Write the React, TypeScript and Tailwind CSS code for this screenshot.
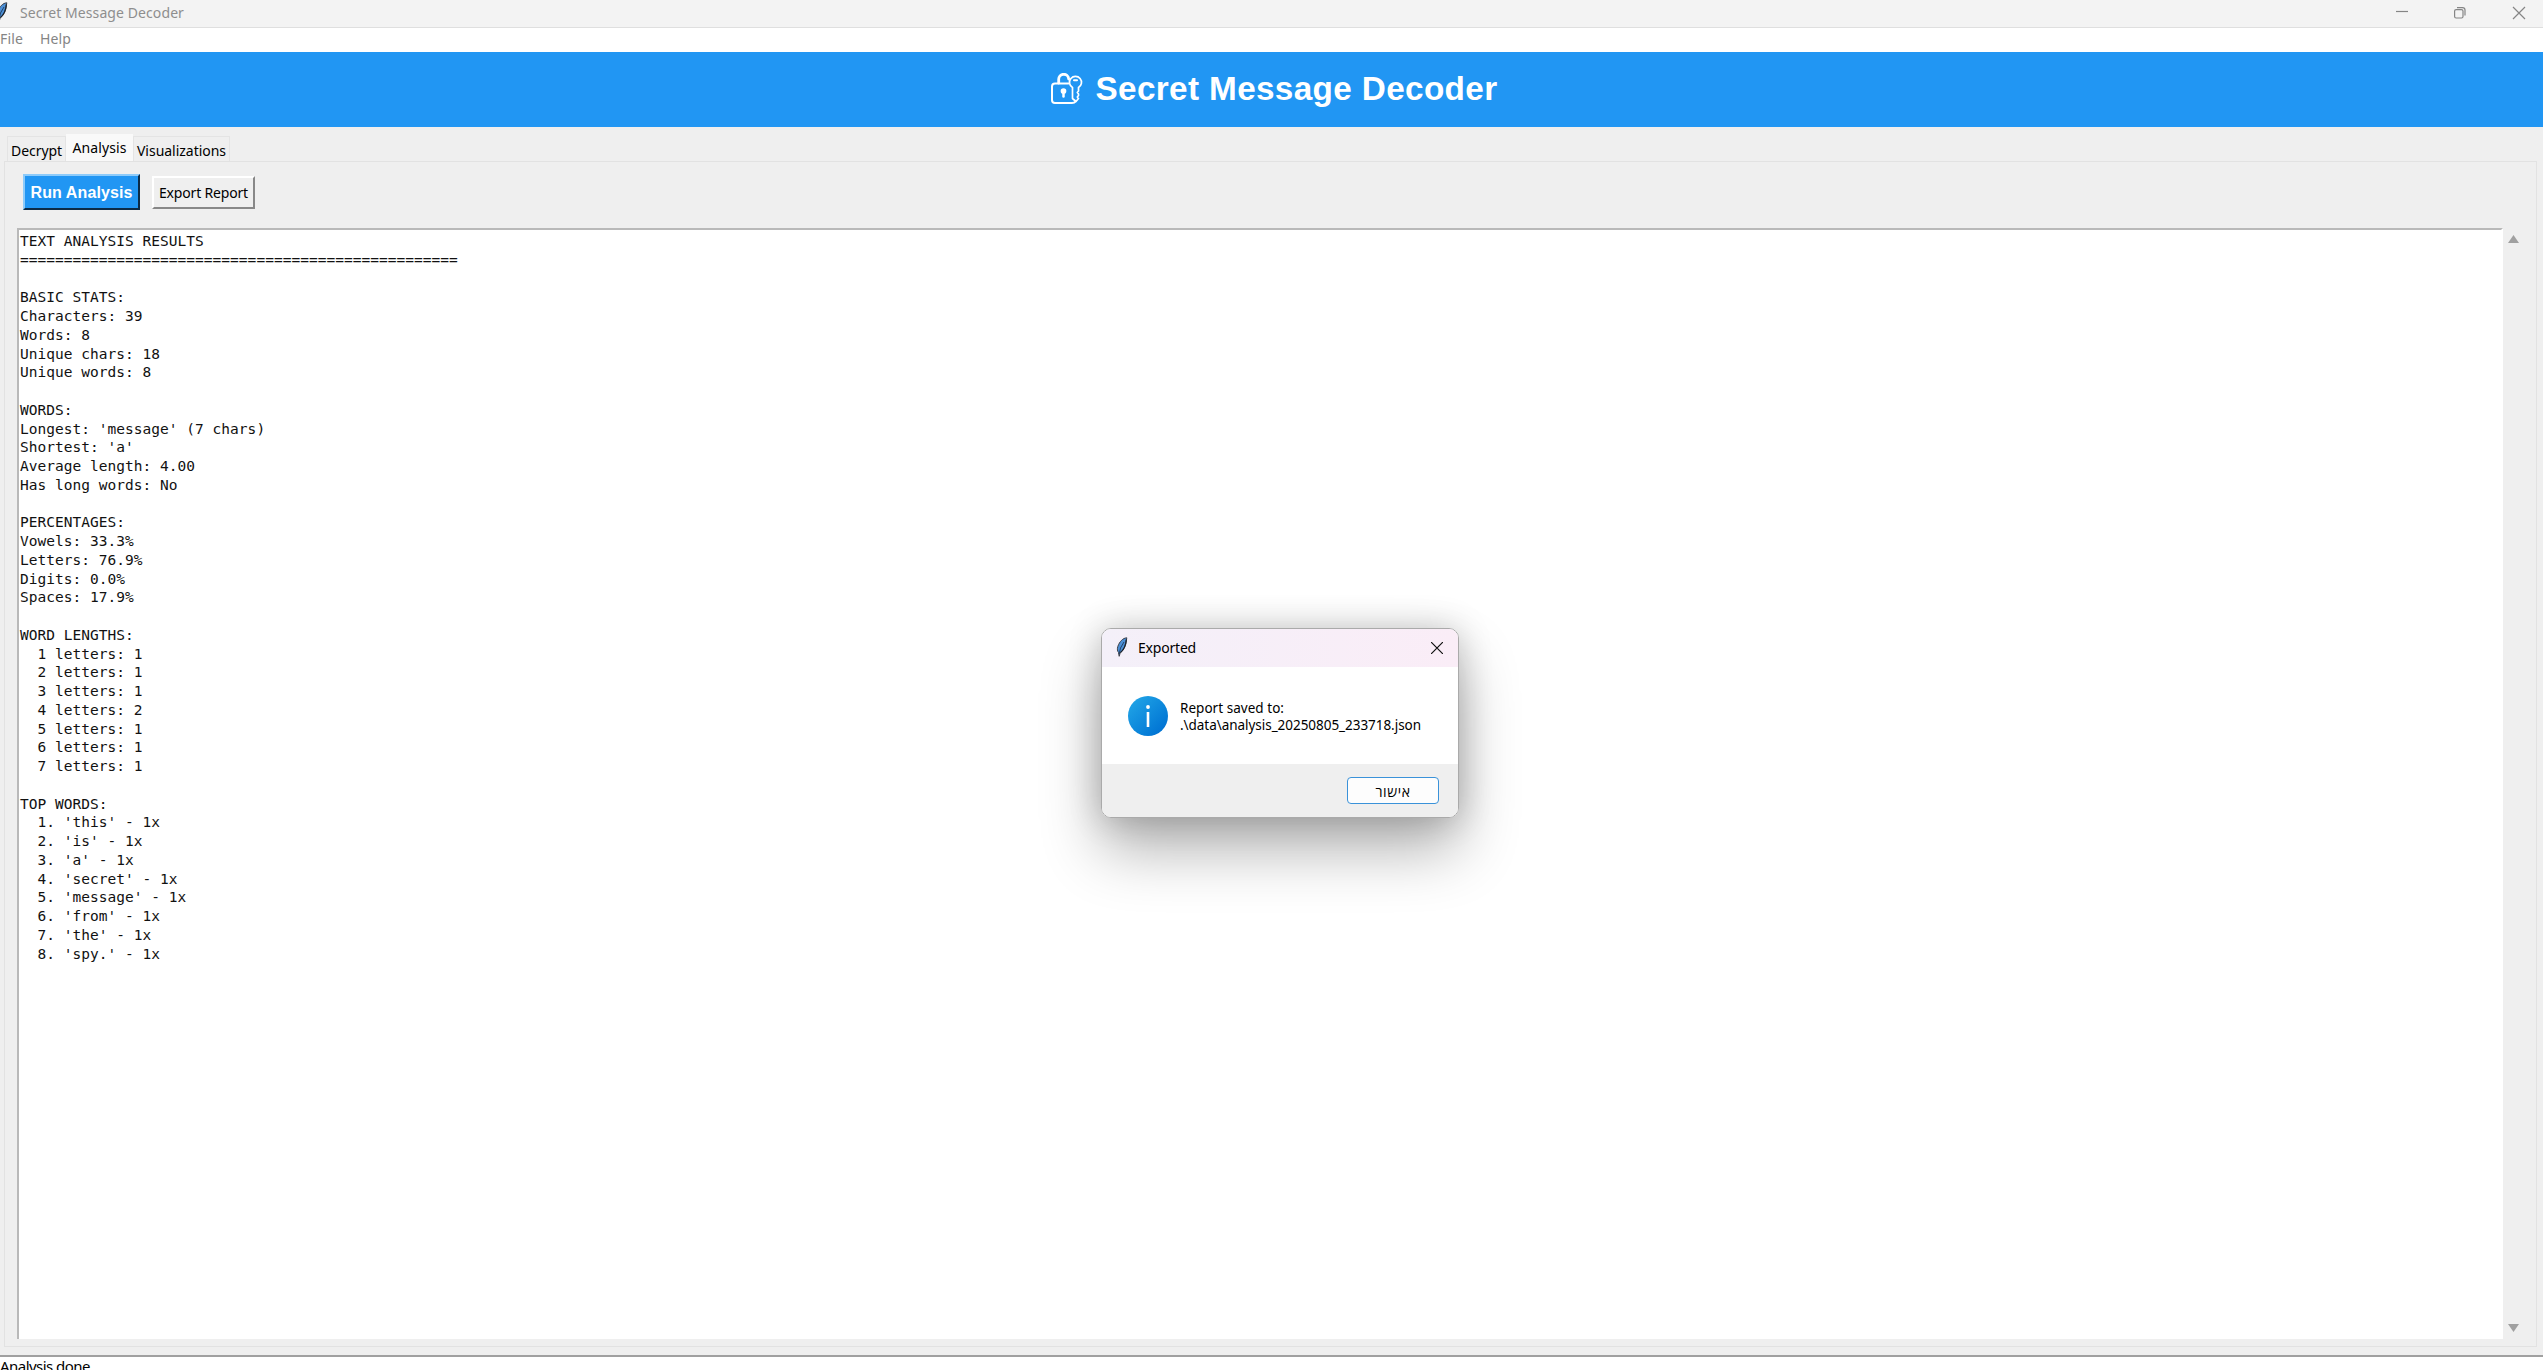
import React from "react";

const REPORT = `TEXT ANALYSIS RESULTS
==================================================

BASIC STATS:
Characters: 39
Words: 8
Unique chars: 18
Unique words: 8

WORDS:
Longest: 'message' (7 chars)
Shortest: 'a'
Average length: 4.00
Has long words: No

PERCENTAGES:
Vowels: 33.3%
Letters: 76.9%
Digits: 0.0%
Spaces: 17.9%

WORD LENGTHS:
  1 letters: 1
  2 letters: 1
  3 letters: 1
  4 letters: 2
  5 letters: 1
  6 letters: 1
  7 letters: 1

TOP WORDS:
  1. 'this' - 1x
  2. 'is' - 1x
  3. 'a' - 1x
  4. 'secret' - 1x
  5. 'message' - 1x
  6. 'from' - 1x
  7. 'the' - 1x
  8. 'spy.' - 1x`;

/* Spreads letter spacing so a caption fills the given width */
function Label({ text, width, className = "", rtl = false }: { text: string; width: number; className?: string; rtl?: boolean }) {
  const ref = React.useRef<HTMLSpanElement>(null);
  const [spacing, setSpacing] = React.useState(0);
  React.useLayoutEffect(() => {
    if (ref.current) {
      const natural = ref.current.getBoundingClientRect().width;
      setSpacing((width - natural) / text.length);
    }
  }, []);
  return (
    <span ref={ref} dir={rtl ? "rtl" : "ltr"} className={"inline-block whitespace-pre " + className} style={{ letterSpacing: spacing }}>
      {text}
    </span>
  );
}

function Feather({ className }: { className: string }) {
  return (
    <svg className={className} viewBox="0 0 12 20">
      <path d="M10.800.800C7 1 3.500 4.500 1.800 9.500c-.7 2.500-.5 4.500.7 6L3.200 19.300l1-3.500C7.500 13.500 9.800 9 10.800.800z" fill="#4b8fd6" stroke="#3c3f46" strokeWidth="1" />
      <path d="M10.300 2.500C10 8 8 12.500 4.500 15.500" fill="none" stroke="#1c222b" strokeWidth="1.300" />
      <path d="M8 5 4.500 11 3.200 17" fill="none" stroke="#1d3a5c" strokeWidth=".9" />
    </svg>
  );
}

function LockKey() {
  return (
    <svg className="h-8 w-[33px]" viewBox="0 0 33 32" fill="none" stroke="white" strokeWidth="1.700" strokeLinejoin="round" strokeLinecap="round">
      <path d="M18.500 10.500H5q-3 0-3 3V27q0 3 3 3H22q2.500 0 3.500-1.500" strokeWidth="2" />
      <path d="M8.700 10V6.500a5 5 0 0 1 10-.5" strokeWidth="2.800" />
      <path d="M22.500 14.500a6 6 0 1 1 6 0V18l-1.200 1.500 1.200 1.500v1.500L27.300 24l1.200 1.500-2.500 3-3.500-3z" />
      <path d="M24 7.200h3" strokeWidth="2" />
      <circle cx="13.500" cy="18" r="2" fill="white" />
      <path d="M13.500 19v4.500" strokeWidth="2.500" />
    </svg>
  );
}

export default function App() {
  return (
    <div className="relative flex h-[1370px] w-full flex-col overflow-hidden bg-[#efefef] font-['Open_Sans',sans-serif] text-black">
      <header className="flex h-7 shrink-0 items-center border-b border-[#dfdfdf] bg-[#f3f3f3]">
        <Feather className="-ml-1 h-5 w-3 shrink-0 -translate-y-[2px]" />
        <div className="ml-3 flex-1 -translate-y-px text-[14px] leading-5 text-[#8e8e8e]">
          <Label text="Secret Message Decoder" width={164} className="font-['Noto_Sans']" />
        </div>
        <svg className="h-6 w-[160px] -translate-y-px" viewBox="0 0 160 24" fill="none" stroke="#858585" strokeWidth="1.200">
          <path d="M13 10.500h12" />
          <rect x="71.600" y="8.600" width="8.400" height="8.400" rx="1.500" />
          <path d="M74 6.600h5.500q2.500 0 2.500 2.500v5.500" />
          <path d="m130 6 12 12m0-12-12 12" />
        </svg>
      </header>
      <nav className="flex h-6 shrink-0 items-center bg-white pb-[3px] text-[14px] leading-5 text-[#858585]">
        <Label text="File" width={23} className="font-['Noto_Sans']" />
        <Label text="Help" width={31} className="ml-[17px] font-['Noto_Sans']" />
      </nav>
      <div className="flex h-[75px] shrink-0 items-center justify-center bg-[#2196f3] pb-px pl-1 text-white">
        <LockKey />
        <div className="ml-[13px] font-['Liberation_Sans'] text-[33.300px] leading-10 font-bold">
          <Label text="Secret Message Decoder" width={402} />
        </div>
      </div>

      <div className="flex h-[34px] shrink-0 items-end pl-[7px] text-[14px] leading-5">
        <div className="flex h-[25px] w-[59px] items-center justify-center border border-b-0 border-[#e4e4e4] pt-[3px]">
          <Label text="Decrypt" width={51} className="font-['Noto_Sans']" />
        </div>
        <div className="z-10 flex h-[27px] w-[67px] items-center justify-center bg-[#f9f9f9] pt-px">
          <Label text="Analysis" width={54} className="font-['Noto_Sans']" />
        </div>
        <div className="flex h-[25px] w-[97px] items-center justify-center border border-b-0 border-[#e4e4e4] pt-[3px]">
          <Label text="Visualizations" width={89} className="font-['Noto_Sans']" />
        </div>
      </div>

      <main className="mr-[6px] ml-1 flex h-[1186px] shrink-0 flex-col border border-[#e2e2e2]">
        <div className="flex h-[66px] shrink-0 items-start pt-3 pl-[18px]">
          <button className="flex h-[36px] w-[117px] items-center justify-center border-2 border-t-[#8dcbfa] border-r-[#0c2b46] border-b-[#0c2b46] border-l-[#8dcbfa] bg-[#2196f3] pt-px font-['Liberation_Sans'] text-base font-bold text-white">
            <Label text="Run Analysis" width={102} />
          </button>
          <button className="mt-[2px] ml-3 flex h-[33px] w-[103px] items-center justify-center border-2 border-t-white border-r-[#888] border-b-[#888] border-l-white bg-[#efefef] pb-px text-[14px]">
            <Label text="Export Report" width={89} className="font-['Noto_Sans']" />
          </button>
        </div>
        <div className="flex h-[1111px] pl-3">
          <div className="w-[2486px] border-t-2 border-r-2 border-l-2 border-[#b9b9b9] border-r-white bg-white pt-[2px] pl-px">
            <pre className="font-['DejaVu_Sans_Mono',monospace] text-[14.500px] leading-[18.750px] tracking-[0.025px] text-[#111]">{REPORT}</pre>
          </div>
          <div className="flex flex-1 flex-col items-start justify-between py-[7px] pl-[5px]">
            <svg className="h-2 w-[11px]" viewBox="0 0 11 8"><path d="M5.500 0 11 8H0z" fill="#a0a0a0" /></svg>
            <svg className="h-2 w-[11px]" viewBox="0 0 11 8"><path d="M5.500 8 11 0H0z" fill="#a0a0a0" /></svg>
          </div>
        </div>
      </main>

      <footer className="mt-[8px] h-5 shrink-0 border-t-2 border-[#a0a0a0] bg-white text-[15px] leading-5">
        <Label text="Analysis done" width={90} className="-translate-y-px font-['Noto_Sans']" />
      </footer>

      <div className="absolute top-[628px] left-[1101px] z-20 flex h-[190px] w-[358px] flex-col overflow-hidden rounded-[10px] border border-[#aaa] shadow-[0_32px_60px_rgba(0,0,0,0.3),0_0_34px_rgba(0,0,0,0.2)]">
        <div className="flex h-[38px] shrink-0 items-center bg-linear-to-r from-[#f4f0f9] to-[#faedf7] pr-[15px] pl-[14px] text-[14px]">
          <Feather className="h-5 w-3 -translate-y-px" />
          <div className="ml-[10px] flex-1 -translate-y-px"><Label text="Exported" width={58} className="font-['Noto_Sans']" /></div>
          <svg className="h-3 w-3" viewBox="0 0 12 12" stroke="#111" strokeWidth="1.200"><path d="m0 0 12 12M12 0 0 12" /></svg>
        </div>
        <div className="flex h-[97px] shrink-0 items-center bg-white pl-[26px]">
          <div className="flex size-10 shrink-0 items-center justify-center rounded-full bg-linear-to-br from-[#24a9e8] to-[#006bd0]">
            <svg className="h-[22px] w-1" viewBox="0 0 4 22" fill="white"><circle cx="2" cy="2" r="1.900" /><path d="M.7 7h2.600v15H.7z" /></svg>
          </div>
          <div className="ml-3 flex flex-col pt-[3px] text-[13.500px] leading-[17px]">
            <Label text="Report saved to:" width={104} className="self-start font-['Noto_Sans']" />
            <Label text={".\\data\\analysis_20250805_233718.json"} width={241} className="self-start font-['Noto_Sans']" />
          </div>
        </div>
        <div className="flex flex-1 items-start justify-end bg-[#efefef] pt-[13px] pr-[19px]">
          <button className="flex h-[27px] w-[92px] items-center justify-center rounded-[4px] border-[1.500px] border-[#3a92d9] bg-[#fdfdfd] pt-[2px] text-[14px]">
            <Label text="אישור" width={35} rtl className="font-['Open_Sans','DejaVu_Sans']" />
          </button>
        </div>
      </div>
    </div>
  );
}
